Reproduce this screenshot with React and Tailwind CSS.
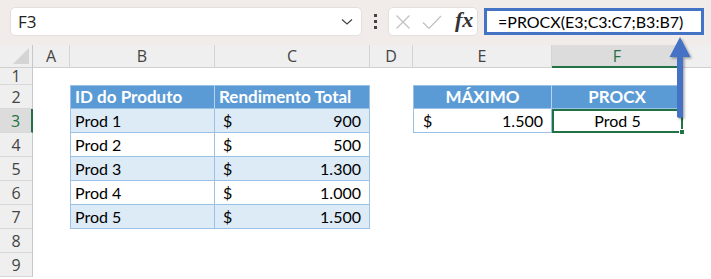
import React from "react";

const cell = "font-['Lato',sans-serif] text-[16px] text-black";
const hcell = "font-['Lato',sans-serif] text-[17px] font-bold text-white";

function ColHead({ label, active, last }) {
  return (
    <div
      className={`flex items-center justify-center text-[16px] font-['Open_Sans',sans-serif] ${
        active
          ? "bg-[#dcdcdc] text-[#217346] border-b-2 border-b-[#217346]"
          : "bg-[#efefef] text-[#444] border-b border-b-[#d0d0d0]"
      } ${last ? "" : "border-r border-r-[#d4d4d4]"}`}
    >
      {label}
    </div>
  );
}

function RowHead({ n, active }) {
  return (
    <div
      className={`flex items-center justify-center text-[16px] font-['Open_Sans',sans-serif] border-b border-b-[#d8d8d8] ${
        active
          ? "bg-[#dcdcdc] text-[#217346] border-r-2 border-r-[#217346]"
          : "bg-[#efefef] text-[#444] border-r border-r-[#c8c8c8]"
      }`}
    >
      {n}
    </div>
  );
}

const products = [
  ["Prod 1", "900"],
  ["Prod 2", "500"],
  ["Prod 3", "1.300"],
  ["Prod 4", "1.000"],
  ["Prod 5", "1.500"],
];

export default function App() {
  const bd = "border-[#9bc2e6]";
  return (
    <div className="relative w-[711px] h-[279px] overflow-hidden bg-white">
      {/* Toolbar */}
      <div className="h-[45px] bg-[#f1ecea] flex items-start pt-[7px] pl-[10px]">
        <div className="w-[352px] h-[29px] bg-white rounded-[5px] border border-[#e4dfdd] flex items-center justify-between pl-[7px] pr-[8px]">
          <span className="text-[17px] font-['Open_Sans',sans-serif] text-[#222]">F3</span>
          <svg width="12" height="8" viewBox="0 0 12 8">
            <path d="M1 1.5 L6 6 L11 1.5" fill="none" stroke="#444" strokeWidth="1.2" />
          </svg>
        </div>
        <div className="w-[26px] h-[29px] flex flex-col items-center justify-center gap-[3px]">
          <div className="w-[3px] h-[3px] bg-[#444]" />
          <div className="w-[3px] h-[3px] bg-[#444]" />
          <div className="w-[3px] h-[3px] bg-[#444]" />
        </div>
        <div className="w-[90px] h-[29px] bg-white rounded-[5px] border border-[#e4dfdd] flex items-center pl-[6px] gap-[11px]">
          <svg width="16" height="16" viewBox="0 0 16 16">
            <path d="M1.5 1.5 L14.5 14.5 M14.5 1.5 L1.5 14.5" stroke="#c0c0c0" strokeWidth="1.2" />
          </svg>
          <svg width="20" height="16" viewBox="0 0 20 16">
            <path d="M1 8.5 L7 14.5 L19 2" fill="none" stroke="#c0c0c0" strokeWidth="1.2" />
          </svg>
          <span className="text-[22px] italic font-semibold font-['Liberation_Serif',serif] text-[#333] leading-none ml-[2px] mb-[3px]">
            fx
          </span>
        </div>
        <div className="ml-[6px] mt-[1px] w-[220px] h-[27px] border-[3px] border-[#4472c4] bg-white flex items-center pl-[11px]">
          <span className="font-['Lato',sans-serif] text-[16px] text-black">
            =PROCX(E3;C3:C7;B3:B7)
          </span>
        </div>
      </div>

      {/* Grid */}
      <div className="grid grid-cols-[33px_37px_145px_155px_43px_139px_131px_1fr] grid-rows-[23px_17px_repeat(8,24px)]">
        <div className="bg-[#efefef] border-r border-r-[#c8c8c8] border-b border-b-[#d0d0d0] relative">
          <svg className="absolute right-[3px] bottom-[3px]" width="16" height="16" viewBox="0 0 16 16">
            <path d="M16 0 L16 16 L0 16 Z" fill="#d4d4d4" />
          </svg>
        </div>
        <ColHead label="A" />
        <ColHead label="B" />
        <ColHead label="C" />
        <ColHead label="D" />
        <ColHead label="E" />
        <ColHead label="F" active />
        <ColHead label="" last />

        <RowHead n={1} />
        <div className="col-span-7" />

        <RowHead n={2} />
        <div />
        <div className={`bg-[#5b9bd5] border-t border-l border-b border-r border-t-[#9bc2e6] border-l-[#9bc2e6] border-b-[#9bc2e6] border-r-[#b7d3ee] flex items-center pl-[4px] ${hcell}`}>
          ID do Produto
        </div>
        <div className={`bg-[#5b9bd5] border-t border-r border-b ${bd} flex items-center pl-[4px] ${hcell}`}>
          Rendimento Total
        </div>
        <div />
        <div className={`bg-[#5b9bd5] border-t border-l border-b border-r border-t-[#9bc2e6] border-l-[#9bc2e6] border-b-[#9bc2e6] border-r-[#b7d3ee] flex items-center justify-center ${hcell}`}>
          MÁXIMO
        </div>
        <div className={`bg-[#5b9bd5] border-t border-r border-b ${bd} flex items-center justify-center ${hcell}`}>
          PROCX
        </div>
        <div />

        {products.map(([p, v], i) => {
          const r = i + 3;
          const bg = i % 2 === 0 ? "bg-[#ddebf7]" : "bg-white";
          return (
            <React.Fragment key={p}>
              <RowHead n={r} active={r === 3} />
              <div />
              <div className={`${bg} border-l border-r border-b ${bd} flex items-center pl-[4px] ${cell}`}>{p}</div>
              <div className={`${bg} border-r border-b ${bd} flex items-center justify-between pl-[8px] pr-[8px] ${cell}`}>
                <span>$</span>
                <span>{v}</span>
              </div>
              <div />
              {r === 3 ? (
                <>
                  <div className={`bg-white border-l border-r border-b ${bd} flex items-center justify-between pl-[9px] pr-[8px] ${cell}`}>
                    <span>$</span>
                    <span>1.500</span>
                  </div>
                  <div className={`relative bg-white border-2 border-[#217346] flex items-center justify-center ${cell}`}>
                    Prod 5
                    <div className="absolute right-[-4px] bottom-[-4px] w-[6px] h-[6px] bg-[#217346] border border-white" />
                  </div>
                </>
              ) : (
                <>
                  <div />
                  <div />
                </>
              )}
              <div />
            </React.Fragment>
          );
        })}

        <RowHead n={8} />
        <div className="col-span-7" />
        <RowHead n={9} />
        <div className="col-span-7" />
      </div>

      {/* Arrow overlay */}
      <svg className="absolute left-[665px] top-[34px]" width="30" height="90" viewBox="0 0 30 90">
        <defs>
          <filter id="sh" x="-50%" y="-20%" width="200%" height="140%">
            <feDropShadow dx="1.5" dy="1.5" stdDeviation="1" floodColor="#000" floodOpacity="0.35" />
          </filter>
        </defs>
        <path
          d="M15 3 L25.5 23 L18 23 L18 83 Q15 85 12 83 L12 23 L4.5 23 Z"
          fill="#4472c4"
          filter="url(#sh)"
        />
      </svg>
    </div>
  );
}
